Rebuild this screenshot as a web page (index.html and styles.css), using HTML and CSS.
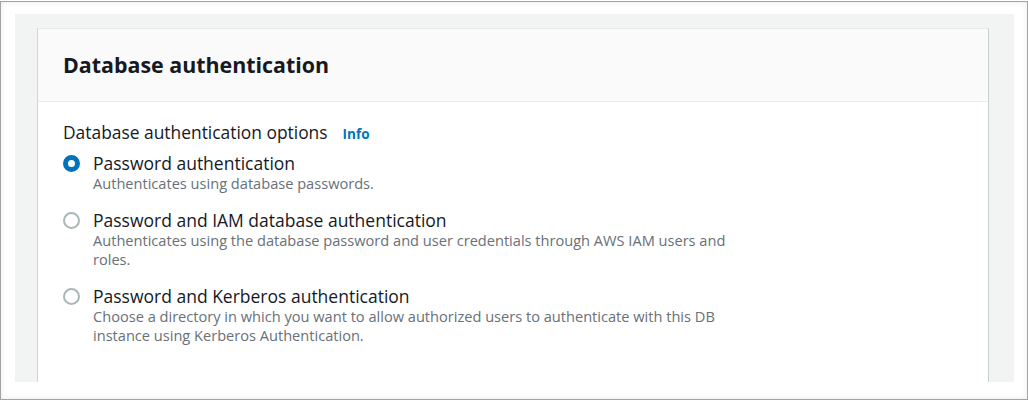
FILE: index.html
```html
<!DOCTYPE html>
<html>
<head>
<meta charset="utf-8">
<link rel="stylesheet" href="styles.css">
</head>
<body>
<div class="frame">
  <div class="canvas">
    <section class="card">
      <header class="card-header">
        <h2 class="card-title">Database authentication</h2>
      </header>
      <div class="card-body">
        <div class="field-label">
          <span class="label-text">Database authentication options</span>
          <a class="info-link">Info</a>
        </div>
        <div class="radio-group">
          <div class="option">
            <span class="radio radio-checked"></span>
            <div class="option-text">
              <div class="option-label">Password authentication</div>
              <div class="option-desc">Authenticates using database passwords.</div>
            </div>
          </div>
          <div class="option">
            <span class="radio"></span>
            <div class="option-text">
              <div class="option-label">Password and IAM database authentication</div>
              <div class="option-desc">Authenticates using the database password and user credentials through AWS IAM users and roles.</div>
            </div>
          </div>
          <div class="option">
            <span class="radio"></span>
            <div class="option-text">
              <div class="option-label">Password and Kerberos authentication</div>
              <div class="option-desc">Choose a directory in which you want to allow authorized users to authenticate with this DB instance using Kerberos Authentication.</div>
            </div>
          </div>
        </div>
      </div>
    </section>
  </div>
</div>
</body>
</html>
```
FILE: styles.css
```css
* { box-sizing: border-box; }
html, body { margin: 0; padding: 0; background: #ffffff; }
body {
  font-family: "Open Sans", "Noto Sans", "Liberation Sans", sans-serif;
  color: #16191f;
}
.frame {
  width: 1028px;
  height: 399px;
  margin-top: 1px;
  border: 1px solid #a3a3a3;
  background: #ffffff;
  box-shadow: inset 0 0 6px rgba(0,0,0,0.08);
  padding: 12px 13px 0 14px;
}
.canvas {
  background: #f2f3f3;
  height: 368px;
  padding: 14px 25px 0 22px;
  overflow: hidden;
}
.card {
  background: #ffffff;
  height: 400px;
  border-left: 1px solid #d0d5d5;
  border-right: 1px solid #c9cfcf;
  border-top: 1px solid #e6e9e9;
}
.card-header {
  background: #fafafa;
  border-bottom: 1px solid #eaeded;
  height: 73px;
  padding: 0 25px;
  display: flex;
  align-items: center;
}
.card-title {
  margin: 0;
  font-size: 21.4px;
  font-weight: 700;
  line-height: 26px;
  color: #16191f;
}
.card-body {
  padding: 19px 25px 0;
}
.field-label {
  display: flex;
  align-items: baseline;
  gap: 15px;
  line-height: 22px;
}
.label-text {
  font-size: 17.4px;
  color: #16191f;
}
.info-link {
  font-size: 13.5px;
  font-weight: 700;
  color: #0073bb;
}
.radio-group {
  display: flex;
  flex-direction: column;
  gap: 15px;
  margin-top: 7px;
}
.option {
  display: flex;
  align-items: flex-start;
  gap: 13px;
}
.radio {
  width: 17px;
  height: 17px;
  border-radius: 50%;
  border: 2px solid #aab7b8;
  margin-top: 3px;
  flex: none;
  background: #ffffff;
}
.radio-checked {
  border: 5px solid #0073bb;
}
.option-text {
  width: 650px;
}
.option-label {
  font-size: 17.5px;
  line-height: 22px;
  color: #16191f;
}
.option-desc {
  font-size: 14.6px;
  line-height: 19.5px;
  color: #687078;
}
```
